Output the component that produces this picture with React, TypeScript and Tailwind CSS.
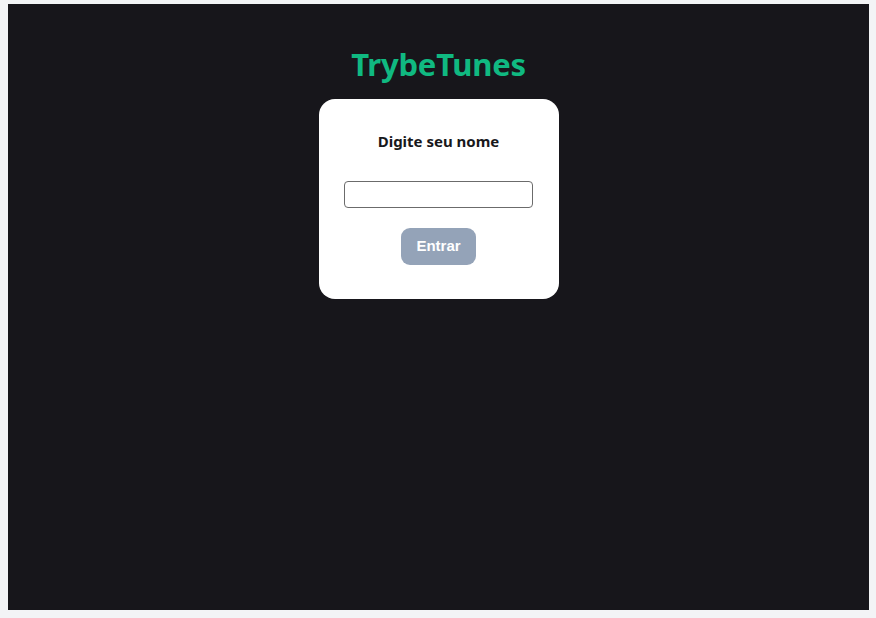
import React, { useState } from 'react';

const App: React.FC = () => {
    const [name, setName] = useState('');

    return (
        <div className="min-h-[618px] w-full bg-[#f3f4f6] pt-[4px] pb-[8px] pl-[8px] pr-[7px]">
            <div className="h-[606px] w-full bg-[#17161b] flex flex-col items-center pt-[40px]" style={{ fontFamily: '"Noto Sans", "Open Sans", sans-serif' }}>
                <h1 className="text-[#10b981] text-[31px] font-bold leading-[40px] tracking-[-0.2px]">TrybeTunes</h1>

                {/* Login card */}
                <div className="mt-[15px] w-[240px] bg-white rounded-2xl flex flex-col items-center pt-[30px] pb-[34px]">
                    <p className="text-[#18181b] text-[15px] font-bold leading-[24px]">Digite seu nome</p>
                    <input
                        type="text"
                        value={name}
                        onChange={e => setName(e.target.value)}
                        className="mt-[28px] w-[189px] h-[27px] border border-[#6b6b6b] rounded-[4px] px-2 text-sm outline-none"
                    />
                    <button
                        disabled={name.length < 3}
                        className="mt-[20px] w-[75px] h-[37px] rounded-[9px] bg-[#94a3b8] text-white text-[15px] font-bold"
                        style={{ fontFamily: '"Liberation Sans", Arial, sans-serif' }}
                    >
                        Entrar
                    </button>
                </div>
            </div>
        </div>
    );
};

export default App;
